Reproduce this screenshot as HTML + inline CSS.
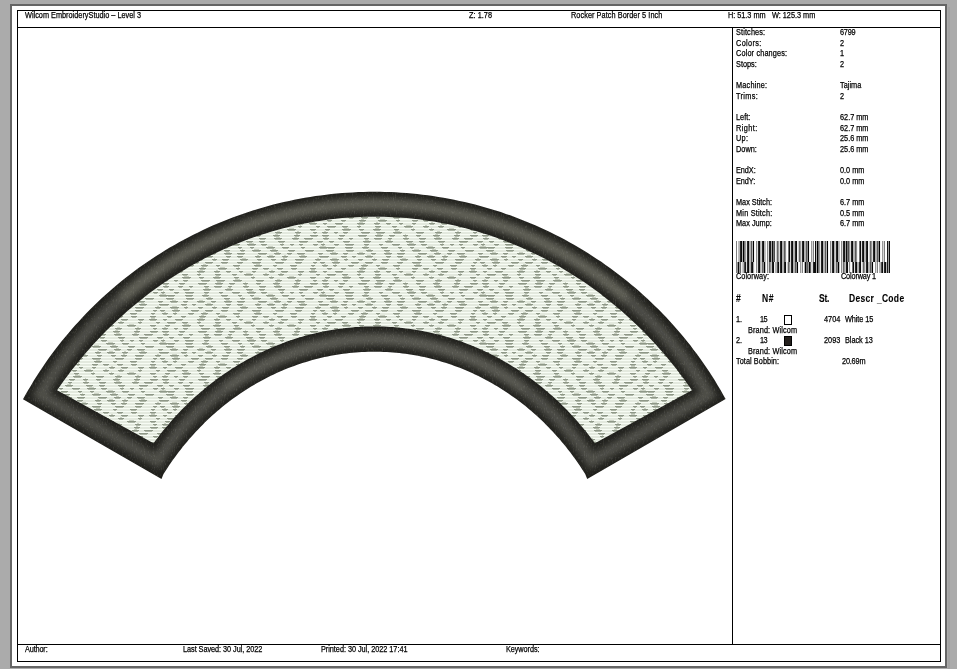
<!DOCTYPE html>
<html><head><meta charset="utf-8"><style>
html,body{margin:0;padding:0}
body{width:957px;height:669px;background:#ababab;position:relative;overflow:hidden}
.abs{position:absolute}
.t,.b{position:absolute;white-space:nowrap;color:#000;font:8.5px 'Liberation Sans', sans-serif;line-height:10px;transform:scaleX(0.86);transform-origin:0 0;-webkit-text-stroke:0.25px #000}
.b{font:bold 9.9px 'Liberation Sans', sans-serif;line-height:10px;transform:scaleX(0.86) scaleY(1.167);transform-origin:0 8px;-webkit-text-stroke:0.1px #000}
#pg{position:absolute;left:10px;top:4px;width:933px;height:660px;border:2px solid #656565;background:#fff}
.ln{position:absolute;background:#000}
</style></head><body>
<div id="pg"></div>
<div class="abs" style="left:948px;top:7px;width:2px;height:662px;background:#a3a3a3"></div>
<div class="ln" style="left:17px;top:10px;width:924px;height:1px"></div>
<div class="ln" style="left:17px;top:661px;width:924px;height:1px"></div>
<div class="ln" style="left:17px;top:10px;width:1px;height:652px"></div>
<div class="ln" style="left:940px;top:10px;width:1px;height:652px"></div>
<div class="ln" style="left:17px;top:27px;width:924px;height:1px"></div>
<div class="ln" style="left:17px;top:644px;width:924px;height:1px"></div>
<div class="ln" style="left:732px;top:27px;width:1px;height:618px"></div>
<svg class="abs" style="left:0;top:0" width="957" height="669">
<defs>
<pattern id="tat" width="160" height="48" patternUnits="userSpaceOnUse"><rect width="160" height="48" fill="#e3e9de"/><rect y="0" width="160" height="1" fill="#f7fcf4"/><rect x="9" y="1" width="5" height="1" fill="#8f9888"/><rect x="10" y="2" width="3" height="1" fill="#b0b8a9"/><rect x="23" y="1" width="7" height="1" fill="#8f9888"/><rect x="24" y="2" width="5" height="1" fill="#b0b8a9"/><rect x="43" y="1" width="8" height="1" fill="#8f9888"/><rect x="44" y="2" width="6" height="1" fill="#b0b8a9"/><rect x="45" y="0" width="4" height="1" fill="#cdd4c6"/><rect x="65" y="1" width="8" height="1" fill="#8f9888"/><rect x="66" y="2" width="6" height="1" fill="#b0b8a9"/><rect x="67" y="0" width="4" height="1" fill="#cdd4c6"/><rect x="86" y="1" width="7" height="1" fill="#8f9888"/><rect x="87" y="2" width="5" height="1" fill="#b0b8a9"/><rect x="99" y="1" width="6" height="1" fill="#8f9888"/><rect x="100" y="2" width="4" height="1" fill="#b0b8a9"/><rect x="118" y="1" width="7" height="1" fill="#8f9888"/><rect x="119" y="2" width="5" height="1" fill="#b0b8a9"/><rect x="139" y="1" width="9" height="1" fill="#8f9888"/><rect x="140" y="2" width="7" height="1" fill="#b0b8a9"/><rect x="157" y="1" width="3" height="1" fill="#8f9888"/><rect x="0" y="1" width="3" height="1" fill="#8f9888"/><rect x="158" y="2" width="2" height="1" fill="#b0b8a9"/><rect x="0" y="2" width="2" height="1" fill="#b0b8a9"/><rect y="3" width="160" height="1" fill="#f7fcf4"/><rect x="1" y="4" width="4" height="1" fill="#8f9888"/><rect x="2" y="5" width="2" height="1" fill="#b0b8a9"/><rect x="3" y="3" width="1" height="1" fill="#cdd4c6"/><rect x="14" y="4" width="5" height="1" fill="#8f9888"/><rect x="15" y="5" width="3" height="1" fill="#b0b8a9"/><rect x="25" y="4" width="9" height="1" fill="#8f9888"/><rect x="26" y="5" width="7" height="1" fill="#b0b8a9"/><rect x="44" y="4" width="5" height="1" fill="#8f9888"/><rect x="45" y="5" width="3" height="1" fill="#b0b8a9"/><rect x="59" y="4" width="4" height="1" fill="#8f9888"/><rect x="60" y="5" width="2" height="1" fill="#b0b8a9"/><rect x="72" y="4" width="8" height="1" fill="#8f9888"/><rect x="73" y="5" width="6" height="1" fill="#b0b8a9"/><rect x="87" y="4" width="9" height="1" fill="#8f9888"/><rect x="88" y="5" width="7" height="1" fill="#b0b8a9"/><rect x="89" y="3" width="5" height="1" fill="#cdd4c6"/><rect x="101" y="4" width="6" height="1" fill="#8f9888"/><rect x="102" y="5" width="4" height="1" fill="#b0b8a9"/><rect x="120" y="4" width="4" height="1" fill="#8f9888"/><rect x="121" y="5" width="2" height="1" fill="#b0b8a9"/><rect x="122" y="3" width="1" height="1" fill="#cdd4c6"/><rect x="130" y="4" width="4" height="1" fill="#8f9888"/><rect x="131" y="5" width="2" height="1" fill="#b0b8a9"/><rect x="139" y="4" width="4" height="1" fill="#8f9888"/><rect x="140" y="5" width="2" height="1" fill="#b0b8a9"/><rect x="153" y="4" width="5" height="1" fill="#8f9888"/><rect x="154" y="5" width="3" height="1" fill="#b0b8a9"/><rect y="6" width="160" height="1" fill="#f7fcf4"/><rect x="7" y="7" width="8" height="1" fill="#8f9888"/><rect x="8" y="8" width="6" height="1" fill="#b0b8a9"/><rect x="25" y="7" width="8" height="1" fill="#8f9888"/><rect x="26" y="8" width="6" height="1" fill="#b0b8a9"/><rect x="42" y="7" width="7" height="1" fill="#8f9888"/><rect x="43" y="8" width="5" height="1" fill="#b0b8a9"/><rect x="44" y="6" width="3" height="1" fill="#cdd4c6"/><rect x="61" y="7" width="7" height="1" fill="#8f9888"/><rect x="62" y="8" width="5" height="1" fill="#b0b8a9"/><rect x="78" y="7" width="4" height="1" fill="#8f9888"/><rect x="79" y="8" width="2" height="1" fill="#b0b8a9"/><rect x="90" y="7" width="4" height="1" fill="#8f9888"/><rect x="91" y="8" width="2" height="1" fill="#b0b8a9"/><rect x="106" y="7" width="9" height="1" fill="#8f9888"/><rect x="107" y="8" width="7" height="1" fill="#b0b8a9"/><rect x="108" y="6" width="5" height="1" fill="#cdd4c6"/><rect x="122" y="7" width="7" height="1" fill="#8f9888"/><rect x="123" y="8" width="5" height="1" fill="#b0b8a9"/><rect x="141" y="7" width="4" height="1" fill="#8f9888"/><rect x="142" y="8" width="2" height="1" fill="#b0b8a9"/><rect x="159" y="7" width="1" height="1" fill="#8f9888"/><rect x="0" y="7" width="8" height="1" fill="#8f9888"/><rect x="0" y="8" width="7" height="1" fill="#b0b8a9"/><rect x="0" y="6" width="6" height="1" fill="#cdd4c6"/><rect y="9" width="160" height="1" fill="#f7fcf4"/><rect x="6" y="10" width="8" height="1" fill="#8f9888"/><rect x="7" y="11" width="6" height="1" fill="#b0b8a9"/><rect x="26" y="10" width="8" height="1" fill="#8f9888"/><rect x="27" y="11" width="6" height="1" fill="#b0b8a9"/><rect x="46" y="10" width="7" height="1" fill="#8f9888"/><rect x="47" y="11" width="5" height="1" fill="#b0b8a9"/><rect x="48" y="9" width="3" height="1" fill="#cdd4c6"/><rect x="64" y="10" width="6" height="1" fill="#8f9888"/><rect x="65" y="11" width="4" height="1" fill="#b0b8a9"/><rect x="80" y="10" width="5" height="1" fill="#8f9888"/><rect x="81" y="11" width="3" height="1" fill="#b0b8a9"/><rect x="82" y="9" width="1" height="1" fill="#cdd4c6"/><rect x="92" y="10" width="9" height="1" fill="#8f9888"/><rect x="93" y="11" width="7" height="1" fill="#b0b8a9"/><rect x="94" y="9" width="5" height="1" fill="#cdd4c6"/><rect x="110" y="10" width="8" height="1" fill="#8f9888"/><rect x="111" y="11" width="6" height="1" fill="#b0b8a9"/><rect x="112" y="9" width="4" height="1" fill="#cdd4c6"/><rect x="128" y="10" width="7" height="1" fill="#8f9888"/><rect x="129" y="11" width="5" height="1" fill="#b0b8a9"/><rect x="145" y="10" width="9" height="1" fill="#8f9888"/><rect x="146" y="11" width="7" height="1" fill="#b0b8a9"/><rect y="12" width="160" height="1" fill="#f7fcf4"/><rect x="10" y="13" width="8" height="1" fill="#8f9888"/><rect x="11" y="14" width="6" height="1" fill="#b0b8a9"/><rect x="12" y="12" width="4" height="1" fill="#cdd4c6"/><rect x="23" y="13" width="5" height="1" fill="#8f9888"/><rect x="24" y="14" width="3" height="1" fill="#b0b8a9"/><rect x="37" y="13" width="8" height="1" fill="#8f9888"/><rect x="38" y="14" width="6" height="1" fill="#b0b8a9"/><rect x="39" y="12" width="4" height="1" fill="#cdd4c6"/><rect x="51" y="13" width="5" height="1" fill="#8f9888"/><rect x="52" y="14" width="3" height="1" fill="#b0b8a9"/><rect x="64" y="13" width="8" height="1" fill="#8f9888"/><rect x="65" y="14" width="6" height="1" fill="#b0b8a9"/><rect x="66" y="12" width="4" height="1" fill="#cdd4c6"/><rect x="77" y="13" width="8" height="1" fill="#8f9888"/><rect x="78" y="14" width="6" height="1" fill="#b0b8a9"/><rect x="98" y="13" width="9" height="1" fill="#8f9888"/><rect x="99" y="14" width="7" height="1" fill="#b0b8a9"/><rect x="114" y="13" width="7" height="1" fill="#8f9888"/><rect x="115" y="14" width="5" height="1" fill="#b0b8a9"/><rect x="116" y="12" width="3" height="1" fill="#cdd4c6"/><rect x="127" y="13" width="5" height="1" fill="#8f9888"/><rect x="128" y="14" width="3" height="1" fill="#b0b8a9"/><rect x="137" y="13" width="8" height="1" fill="#8f9888"/><rect x="138" y="14" width="6" height="1" fill="#b0b8a9"/><rect x="158" y="13" width="2" height="1" fill="#8f9888"/><rect x="0" y="13" width="3" height="1" fill="#8f9888"/><rect x="159" y="14" width="1" height="1" fill="#b0b8a9"/><rect x="0" y="14" width="2" height="1" fill="#b0b8a9"/><rect y="15" width="160" height="1" fill="#f7fcf4"/><rect x="5" y="16" width="4" height="1" fill="#8f9888"/><rect x="6" y="17" width="2" height="1" fill="#b0b8a9"/><rect x="21" y="16" width="6" height="1" fill="#8f9888"/><rect x="22" y="17" width="4" height="1" fill="#b0b8a9"/><rect x="32" y="16" width="4" height="1" fill="#8f9888"/><rect x="33" y="17" width="2" height="1" fill="#b0b8a9"/><rect x="45" y="16" width="8" height="1" fill="#8f9888"/><rect x="46" y="17" width="6" height="1" fill="#b0b8a9"/><rect x="47" y="15" width="4" height="1" fill="#cdd4c6"/><rect x="66" y="16" width="5" height="1" fill="#8f9888"/><rect x="67" y="17" width="3" height="1" fill="#b0b8a9"/><rect x="77" y="16" width="6" height="1" fill="#8f9888"/><rect x="78" y="17" width="4" height="1" fill="#b0b8a9"/><rect x="95" y="16" width="6" height="1" fill="#8f9888"/><rect x="96" y="17" width="4" height="1" fill="#b0b8a9"/><rect x="97" y="15" width="2" height="1" fill="#cdd4c6"/><rect x="107" y="16" width="8" height="1" fill="#8f9888"/><rect x="108" y="17" width="6" height="1" fill="#b0b8a9"/><rect x="109" y="15" width="4" height="1" fill="#cdd4c6"/><rect x="122" y="16" width="6" height="1" fill="#8f9888"/><rect x="123" y="17" width="4" height="1" fill="#b0b8a9"/><rect x="124" y="15" width="2" height="1" fill="#cdd4c6"/><rect x="139" y="16" width="8" height="1" fill="#8f9888"/><rect x="140" y="17" width="6" height="1" fill="#b0b8a9"/><rect x="141" y="15" width="4" height="1" fill="#cdd4c6"/><rect x="159" y="16" width="1" height="1" fill="#8f9888"/><rect x="0" y="16" width="7" height="1" fill="#8f9888"/><rect x="0" y="17" width="6" height="1" fill="#b0b8a9"/><rect y="18" width="160" height="1" fill="#f7fcf4"/><rect x="10" y="19" width="9" height="1" fill="#8f9888"/><rect x="11" y="20" width="7" height="1" fill="#b0b8a9"/><rect x="12" y="18" width="5" height="1" fill="#cdd4c6"/><rect x="24" y="19" width="4" height="1" fill="#8f9888"/><rect x="25" y="20" width="2" height="1" fill="#b0b8a9"/><rect x="26" y="18" width="1" height="1" fill="#cdd4c6"/><rect x="38" y="19" width="5" height="1" fill="#8f9888"/><rect x="39" y="20" width="3" height="1" fill="#b0b8a9"/><rect x="52" y="19" width="5" height="1" fill="#8f9888"/><rect x="53" y="20" width="3" height="1" fill="#b0b8a9"/><rect x="54" y="18" width="1" height="1" fill="#cdd4c6"/><rect x="62" y="19" width="7" height="1" fill="#8f9888"/><rect x="63" y="20" width="5" height="1" fill="#b0b8a9"/><rect x="80" y="19" width="8" height="1" fill="#8f9888"/><rect x="81" y="20" width="6" height="1" fill="#b0b8a9"/><rect x="82" y="18" width="4" height="1" fill="#cdd4c6"/><rect x="97" y="19" width="5" height="1" fill="#8f9888"/><rect x="98" y="20" width="3" height="1" fill="#b0b8a9"/><rect x="111" y="19" width="5" height="1" fill="#8f9888"/><rect x="112" y="20" width="3" height="1" fill="#b0b8a9"/><rect x="121" y="19" width="6" height="1" fill="#8f9888"/><rect x="122" y="20" width="4" height="1" fill="#b0b8a9"/><rect x="123" y="18" width="2" height="1" fill="#cdd4c6"/><rect x="135" y="19" width="9" height="1" fill="#8f9888"/><rect x="136" y="20" width="7" height="1" fill="#b0b8a9"/><rect x="155" y="19" width="5" height="1" fill="#8f9888"/><rect x="0" y="19" width="1" height="1" fill="#8f9888"/><rect x="156" y="20" width="4" height="1" fill="#b0b8a9"/><rect x="157" y="18" width="2" height="1" fill="#cdd4c6"/><rect y="21" width="160" height="1" fill="#f7fcf4"/><rect x="0" y="22" width="5" height="1" fill="#8f9888"/><rect x="1" y="23" width="3" height="1" fill="#b0b8a9"/><rect x="12" y="22" width="8" height="1" fill="#8f9888"/><rect x="13" y="23" width="6" height="1" fill="#b0b8a9"/><rect x="14" y="21" width="4" height="1" fill="#cdd4c6"/><rect x="31" y="22" width="8" height="1" fill="#8f9888"/><rect x="32" y="23" width="6" height="1" fill="#b0b8a9"/><rect x="45" y="22" width="8" height="1" fill="#8f9888"/><rect x="46" y="23" width="6" height="1" fill="#b0b8a9"/><rect x="61" y="22" width="7" height="1" fill="#8f9888"/><rect x="62" y="23" width="5" height="1" fill="#b0b8a9"/><rect x="77" y="22" width="6" height="1" fill="#8f9888"/><rect x="78" y="23" width="4" height="1" fill="#b0b8a9"/><rect x="92" y="22" width="9" height="1" fill="#8f9888"/><rect x="93" y="23" width="7" height="1" fill="#b0b8a9"/><rect x="115" y="22" width="9" height="1" fill="#8f9888"/><rect x="116" y="23" width="7" height="1" fill="#b0b8a9"/><rect x="135" y="22" width="7" height="1" fill="#8f9888"/><rect x="136" y="23" width="5" height="1" fill="#b0b8a9"/><rect x="153" y="22" width="4" height="1" fill="#8f9888"/><rect x="154" y="23" width="2" height="1" fill="#b0b8a9"/><rect y="24" width="160" height="1" fill="#f7fcf4"/><rect x="2" y="25" width="6" height="1" fill="#8f9888"/><rect x="3" y="26" width="4" height="1" fill="#b0b8a9"/><rect x="4" y="24" width="2" height="1" fill="#cdd4c6"/><rect x="13" y="25" width="4" height="1" fill="#8f9888"/><rect x="14" y="26" width="2" height="1" fill="#b0b8a9"/><rect x="15" y="24" width="1" height="1" fill="#cdd4c6"/><rect x="28" y="25" width="6" height="1" fill="#8f9888"/><rect x="29" y="26" width="4" height="1" fill="#b0b8a9"/><rect x="41" y="25" width="7" height="1" fill="#8f9888"/><rect x="42" y="26" width="5" height="1" fill="#b0b8a9"/><rect x="43" y="24" width="3" height="1" fill="#cdd4c6"/><rect x="56" y="25" width="4" height="1" fill="#8f9888"/><rect x="57" y="26" width="2" height="1" fill="#b0b8a9"/><rect x="73" y="25" width="7" height="1" fill="#8f9888"/><rect x="74" y="26" width="5" height="1" fill="#b0b8a9"/><rect x="94" y="25" width="8" height="1" fill="#8f9888"/><rect x="95" y="26" width="6" height="1" fill="#b0b8a9"/><rect x="96" y="24" width="4" height="1" fill="#cdd4c6"/><rect x="113" y="25" width="4" height="1" fill="#8f9888"/><rect x="114" y="26" width="2" height="1" fill="#b0b8a9"/><rect x="130" y="25" width="7" height="1" fill="#8f9888"/><rect x="131" y="26" width="5" height="1" fill="#b0b8a9"/><rect x="151" y="25" width="4" height="1" fill="#8f9888"/><rect x="152" y="26" width="2" height="1" fill="#b0b8a9"/><rect y="27" width="160" height="1" fill="#f7fcf4"/><rect x="7" y="28" width="5" height="1" fill="#8f9888"/><rect x="8" y="29" width="3" height="1" fill="#b0b8a9"/><rect x="21" y="28" width="5" height="1" fill="#8f9888"/><rect x="22" y="29" width="3" height="1" fill="#b0b8a9"/><rect x="39" y="28" width="7" height="1" fill="#8f9888"/><rect x="40" y="29" width="5" height="1" fill="#b0b8a9"/><rect x="41" y="27" width="3" height="1" fill="#cdd4c6"/><rect x="58" y="28" width="9" height="1" fill="#8f9888"/><rect x="59" y="29" width="7" height="1" fill="#b0b8a9"/><rect x="60" y="27" width="5" height="1" fill="#cdd4c6"/><rect x="76" y="28" width="4" height="1" fill="#8f9888"/><rect x="77" y="29" width="2" height="1" fill="#b0b8a9"/><rect x="78" y="27" width="1" height="1" fill="#cdd4c6"/><rect x="92" y="28" width="6" height="1" fill="#8f9888"/><rect x="93" y="29" width="4" height="1" fill="#b0b8a9"/><rect x="103" y="28" width="6" height="1" fill="#8f9888"/><rect x="104" y="29" width="4" height="1" fill="#b0b8a9"/><rect x="117" y="28" width="6" height="1" fill="#8f9888"/><rect x="118" y="29" width="4" height="1" fill="#b0b8a9"/><rect x="131" y="28" width="6" height="1" fill="#8f9888"/><rect x="132" y="29" width="4" height="1" fill="#b0b8a9"/><rect x="150" y="28" width="6" height="1" fill="#8f9888"/><rect x="151" y="29" width="4" height="1" fill="#b0b8a9"/><rect y="30" width="160" height="1" fill="#f7fcf4"/><rect x="3" y="31" width="4" height="1" fill="#8f9888"/><rect x="4" y="32" width="2" height="1" fill="#b0b8a9"/><rect x="15" y="31" width="8" height="1" fill="#8f9888"/><rect x="16" y="32" width="6" height="1" fill="#b0b8a9"/><rect x="37" y="31" width="8" height="1" fill="#8f9888"/><rect x="38" y="32" width="6" height="1" fill="#b0b8a9"/><rect x="39" y="30" width="4" height="1" fill="#cdd4c6"/><rect x="54" y="31" width="6" height="1" fill="#8f9888"/><rect x="55" y="32" width="4" height="1" fill="#b0b8a9"/><rect x="56" y="30" width="2" height="1" fill="#cdd4c6"/><rect x="66" y="31" width="5" height="1" fill="#8f9888"/><rect x="67" y="32" width="3" height="1" fill="#b0b8a9"/><rect x="79" y="31" width="4" height="1" fill="#8f9888"/><rect x="80" y="32" width="2" height="1" fill="#b0b8a9"/><rect x="92" y="31" width="4" height="1" fill="#8f9888"/><rect x="93" y="32" width="2" height="1" fill="#b0b8a9"/><rect x="109" y="31" width="6" height="1" fill="#8f9888"/><rect x="110" y="32" width="4" height="1" fill="#b0b8a9"/><rect x="111" y="30" width="2" height="1" fill="#cdd4c6"/><rect x="121" y="31" width="7" height="1" fill="#8f9888"/><rect x="122" y="32" width="5" height="1" fill="#b0b8a9"/><rect x="138" y="31" width="6" height="1" fill="#8f9888"/><rect x="139" y="32" width="4" height="1" fill="#b0b8a9"/><rect x="149" y="31" width="8" height="1" fill="#8f9888"/><rect x="150" y="32" width="6" height="1" fill="#b0b8a9"/><rect x="151" y="30" width="4" height="1" fill="#cdd4c6"/><rect y="33" width="160" height="1" fill="#f7fcf4"/><rect x="7" y="34" width="9" height="1" fill="#8f9888"/><rect x="8" y="35" width="7" height="1" fill="#b0b8a9"/><rect x="22" y="34" width="6" height="1" fill="#8f9888"/><rect x="23" y="35" width="4" height="1" fill="#b0b8a9"/><rect x="37" y="34" width="4" height="1" fill="#8f9888"/><rect x="38" y="35" width="2" height="1" fill="#b0b8a9"/><rect x="39" y="33" width="1" height="1" fill="#cdd4c6"/><rect x="55" y="34" width="6" height="1" fill="#8f9888"/><rect x="56" y="35" width="4" height="1" fill="#b0b8a9"/><rect x="72" y="34" width="5" height="1" fill="#8f9888"/><rect x="73" y="35" width="3" height="1" fill="#b0b8a9"/><rect x="84" y="34" width="9" height="1" fill="#8f9888"/><rect x="85" y="35" width="7" height="1" fill="#b0b8a9"/><rect x="86" y="33" width="5" height="1" fill="#cdd4c6"/><rect x="103" y="34" width="6" height="1" fill="#8f9888"/><rect x="104" y="35" width="4" height="1" fill="#b0b8a9"/><rect x="105" y="33" width="2" height="1" fill="#cdd4c6"/><rect x="118" y="34" width="6" height="1" fill="#8f9888"/><rect x="119" y="35" width="4" height="1" fill="#b0b8a9"/><rect x="120" y="33" width="2" height="1" fill="#cdd4c6"/><rect x="138" y="34" width="4" height="1" fill="#8f9888"/><rect x="139" y="35" width="2" height="1" fill="#b0b8a9"/><rect x="140" y="33" width="1" height="1" fill="#cdd4c6"/><rect x="156" y="34" width="4" height="1" fill="#8f9888"/><rect x="157" y="35" width="2" height="1" fill="#b0b8a9"/><rect y="36" width="160" height="1" fill="#f7fcf4"/><rect x="5" y="37" width="5" height="1" fill="#8f9888"/><rect x="6" y="38" width="3" height="1" fill="#b0b8a9"/><rect x="22" y="37" width="9" height="1" fill="#8f9888"/><rect x="23" y="38" width="7" height="1" fill="#b0b8a9"/><rect x="24" y="36" width="5" height="1" fill="#cdd4c6"/><rect x="39" y="37" width="5" height="1" fill="#8f9888"/><rect x="40" y="38" width="3" height="1" fill="#b0b8a9"/><rect x="53" y="37" width="8" height="1" fill="#8f9888"/><rect x="54" y="38" width="6" height="1" fill="#b0b8a9"/><rect x="55" y="36" width="4" height="1" fill="#cdd4c6"/><rect x="74" y="37" width="5" height="1" fill="#8f9888"/><rect x="75" y="38" width="3" height="1" fill="#b0b8a9"/><rect x="91" y="37" width="4" height="1" fill="#8f9888"/><rect x="92" y="38" width="2" height="1" fill="#b0b8a9"/><rect x="93" y="36" width="1" height="1" fill="#cdd4c6"/><rect x="109" y="37" width="5" height="1" fill="#8f9888"/><rect x="110" y="38" width="3" height="1" fill="#b0b8a9"/><rect x="111" y="36" width="1" height="1" fill="#cdd4c6"/><rect x="127" y="37" width="9" height="1" fill="#8f9888"/><rect x="128" y="38" width="7" height="1" fill="#b0b8a9"/><rect x="129" y="36" width="5" height="1" fill="#cdd4c6"/><rect x="150" y="37" width="6" height="1" fill="#8f9888"/><rect x="151" y="38" width="4" height="1" fill="#b0b8a9"/><rect y="39" width="160" height="1" fill="#f7fcf4"/><rect x="2" y="40" width="6" height="1" fill="#8f9888"/><rect x="3" y="41" width="4" height="1" fill="#b0b8a9"/><rect x="4" y="39" width="2" height="1" fill="#cdd4c6"/><rect x="14" y="40" width="4" height="1" fill="#8f9888"/><rect x="15" y="41" width="2" height="1" fill="#b0b8a9"/><rect x="23" y="40" width="5" height="1" fill="#8f9888"/><rect x="24" y="41" width="3" height="1" fill="#b0b8a9"/><rect x="41" y="40" width="9" height="1" fill="#8f9888"/><rect x="42" y="41" width="7" height="1" fill="#b0b8a9"/><rect x="56" y="40" width="9" height="1" fill="#8f9888"/><rect x="57" y="41" width="7" height="1" fill="#b0b8a9"/><rect x="73" y="40" width="9" height="1" fill="#8f9888"/><rect x="74" y="41" width="7" height="1" fill="#b0b8a9"/><rect x="75" y="39" width="5" height="1" fill="#cdd4c6"/><rect x="96" y="40" width="8" height="1" fill="#8f9888"/><rect x="97" y="41" width="6" height="1" fill="#b0b8a9"/><rect x="115" y="40" width="7" height="1" fill="#8f9888"/><rect x="116" y="41" width="5" height="1" fill="#b0b8a9"/><rect x="117" y="39" width="3" height="1" fill="#cdd4c6"/><rect x="135" y="40" width="6" height="1" fill="#8f9888"/><rect x="136" y="41" width="4" height="1" fill="#b0b8a9"/><rect x="137" y="39" width="2" height="1" fill="#cdd4c6"/><rect x="153" y="40" width="4" height="1" fill="#8f9888"/><rect x="154" y="41" width="2" height="1" fill="#b0b8a9"/><rect y="42" width="160" height="1" fill="#f7fcf4"/><rect x="2" y="43" width="7" height="1" fill="#8f9888"/><rect x="3" y="44" width="5" height="1" fill="#b0b8a9"/><rect x="19" y="43" width="6" height="1" fill="#8f9888"/><rect x="20" y="44" width="4" height="1" fill="#b0b8a9"/><rect x="38" y="43" width="9" height="1" fill="#8f9888"/><rect x="39" y="44" width="7" height="1" fill="#b0b8a9"/><rect x="55" y="43" width="8" height="1" fill="#8f9888"/><rect x="56" y="44" width="6" height="1" fill="#b0b8a9"/><rect x="57" y="42" width="4" height="1" fill="#cdd4c6"/><rect x="69" y="43" width="6" height="1" fill="#8f9888"/><rect x="70" y="44" width="4" height="1" fill="#b0b8a9"/><rect x="83" y="43" width="5" height="1" fill="#8f9888"/><rect x="84" y="44" width="3" height="1" fill="#b0b8a9"/><rect x="85" y="42" width="1" height="1" fill="#cdd4c6"/><rect x="96" y="43" width="5" height="1" fill="#8f9888"/><rect x="97" y="44" width="3" height="1" fill="#b0b8a9"/><rect x="113" y="43" width="7" height="1" fill="#8f9888"/><rect x="114" y="44" width="5" height="1" fill="#b0b8a9"/><rect x="115" y="42" width="3" height="1" fill="#cdd4c6"/><rect x="134" y="43" width="6" height="1" fill="#8f9888"/><rect x="135" y="44" width="4" height="1" fill="#b0b8a9"/><rect x="136" y="42" width="2" height="1" fill="#cdd4c6"/><rect x="150" y="43" width="8" height="1" fill="#8f9888"/><rect x="151" y="44" width="6" height="1" fill="#b0b8a9"/><rect y="45" width="160" height="1" fill="#f7fcf4"/><rect x="3" y="46" width="6" height="1" fill="#8f9888"/><rect x="4" y="47" width="4" height="1" fill="#b0b8a9"/><rect x="5" y="45" width="2" height="1" fill="#cdd4c6"/><rect x="18" y="46" width="5" height="1" fill="#8f9888"/><rect x="19" y="47" width="3" height="1" fill="#b0b8a9"/><rect x="29" y="46" width="4" height="1" fill="#8f9888"/><rect x="30" y="47" width="2" height="1" fill="#b0b8a9"/><rect x="44" y="46" width="5" height="1" fill="#8f9888"/><rect x="45" y="47" width="3" height="1" fill="#b0b8a9"/><rect x="54" y="46" width="8" height="1" fill="#8f9888"/><rect x="55" y="47" width="6" height="1" fill="#b0b8a9"/><rect x="68" y="46" width="4" height="1" fill="#8f9888"/><rect x="69" y="47" width="2" height="1" fill="#b0b8a9"/><rect x="83" y="46" width="6" height="1" fill="#8f9888"/><rect x="84" y="47" width="4" height="1" fill="#b0b8a9"/><rect x="85" y="45" width="2" height="1" fill="#cdd4c6"/><rect x="99" y="46" width="7" height="1" fill="#8f9888"/><rect x="100" y="47" width="5" height="1" fill="#b0b8a9"/><rect x="114" y="46" width="8" height="1" fill="#8f9888"/><rect x="115" y="47" width="6" height="1" fill="#b0b8a9"/><rect x="116" y="45" width="4" height="1" fill="#cdd4c6"/><rect x="132" y="46" width="7" height="1" fill="#8f9888"/><rect x="133" y="47" width="5" height="1" fill="#b0b8a9"/><rect x="134" y="45" width="3" height="1" fill="#cdd4c6"/><rect x="144" y="46" width="9" height="1" fill="#8f9888"/><rect x="145" y="47" width="7" height="1" fill="#b0b8a9"/></pattern>
<clipPath id="oc"><path d="M 23.0,399.2 25.6,394.6 28.2,389.9 31.0,385.4 33.7,380.8 36.6,376.3 39.5,371.8 42.4,367.4 45.4,363.0 48.5,358.6 51.6,354.3 54.8,350.0 58.1,345.8 61.4,341.6 64.8,337.5 68.2,333.4 71.7,329.3 75.2,325.3 78.8,321.4 82.4,317.4 86.1,313.6 89.8,309.8 93.6,306.0 97.5,302.3 101.4,298.6 105.3,295.0 109.3,291.5 113.3,288.0 117.4,284.5 121.6,281.1 125.7,277.8 130.0,274.5 134.2,271.3 138.5,268.1 142.9,265.0 147.3,262.0 151.7,259.0 156.2,256.0 160.7,253.2 165.3,250.3 169.8,247.6 174.5,244.9 179.1,242.3 183.8,239.7 188.6,237.2 193.3,234.8 198.1,232.4 203.0,230.1 207.8,227.8 212.7,225.6 217.6,223.5 222.6,221.5 227.6,219.5 232.6,217.6 237.6,215.7 242.6,213.9 247.7,212.2 252.8,210.5 257.9,209.0 263.1,207.4 268.2,206.0 273.4,204.6 278.6,203.3 283.8,202.1 289.1,200.9 294.3,199.8 299.6,198.8 304.9,197.8 310.2,196.9 315.5,196.1 320.8,195.4 326.1,194.7 331.4,194.1 336.7,193.5 342.1,193.1 347.4,192.7 352.8,192.4 358.2,192.1 363.5,191.9 368.9,191.8 374.2,191.8 379.6,191.8 385.0,191.9 390.3,192.1 395.7,192.3 401.0,192.7 406.4,193.1 411.7,193.5 417.1,194.1 422.4,194.7 427.7,195.3 433.0,196.1 438.3,196.9 443.6,197.8 448.9,198.7 454.2,199.8 459.4,200.9 464.7,202.0 469.9,203.3 475.1,204.6 480.3,205.9 485.4,207.4 490.6,208.9 495.7,210.5 500.8,212.1 505.9,213.9 510.9,215.6 515.9,217.5 520.9,219.4 525.9,221.4 530.9,223.4 535.8,225.6 540.7,227.7 545.6,230.0 550.4,232.3 555.2,234.7 559.9,237.1 564.7,239.6 569.4,242.2 574.0,244.8 578.7,247.5 583.3,250.2 587.8,253.1 592.3,255.9 596.8,258.9 601.3,261.8 605.6,264.9 610.0,268.0 614.3,271.2 618.6,274.4 622.8,277.7 627.0,281.0 631.1,284.4 635.2,287.8 639.2,291.3 643.2,294.9 647.2,298.5 651.1,302.2 654.9,305.9 658.7,309.6 662.5,313.4 666.2,317.3 669.8,321.2 673.4,325.2 676.9,329.2 680.4,333.2 683.8,337.3 687.2,341.4 690.5,345.6 693.7,349.9 696.9,354.1 700.1,358.4 703.1,362.8 706.2,367.2 709.1,371.6 712.0,376.1 714.9,380.6 717.6,385.2 720.4,389.8 723.0,394.4 725.6,399.0 L 587.2,479.0 585.2,474.0 583.4,471.2 581.6,468.4 579.7,465.6 577.8,462.8 575.9,460.1 574.0,457.4 572.0,454.7 570.0,452.0 567.9,449.4 565.9,446.8 563.8,444.2 561.6,441.7 559.5,439.1 557.3,436.7 555.1,434.2 552.9,431.8 550.6,429.4 548.3,427.0 546.0,424.7 543.7,422.3 541.3,420.1 538.9,417.8 536.5,415.6 534.1,413.4 531.6,411.3 529.1,409.2 526.6,407.1 524.1,405.1 521.5,403.1 518.9,401.1 516.3,399.1 513.7,397.2 511.1,395.4 508.4,393.5 505.7,391.7 503.0,390.0 500.3,388.3 497.6,386.6 494.8,384.9 492.0,383.3 489.2,381.7 486.4,380.2 483.6,378.7 480.8,377.3 477.9,375.8 475.0,374.4 472.1,373.1 469.2,371.8 466.3,370.5 463.4,369.3 460.4,368.1 457.5,367.0 454.5,365.9 451.5,364.8 448.5,363.8 445.5,362.8 442.5,361.9 439.5,361.0 436.4,360.1 433.4,359.3 430.3,358.5 427.3,357.8 424.2,357.1 421.1,356.4 418.0,355.8 414.9,355.2 411.8,354.7 408.7,354.2 405.6,353.8 402.5,353.4 399.4,353.0 396.3,352.7 393.1,352.4 390.0,352.2 386.9,352.0 383.8,351.9 380.6,351.7 377.5,351.7 374.4,351.7 371.2,351.7 368.1,351.7 364.9,351.9 361.8,352.0 358.7,352.2 355.6,352.4 352.4,352.7 349.3,353.0 346.2,353.4 343.1,353.8 340.0,354.2 336.9,354.7 333.8,355.2 330.7,355.8 327.6,356.4 324.5,357.1 321.4,357.8 318.4,358.5 315.3,359.3 312.3,360.1 309.2,361.0 306.2,361.9 303.2,362.8 300.2,363.8 297.2,364.8 294.2,365.9 291.2,367.0 288.3,368.1 285.3,369.3 282.4,370.5 279.5,371.8 276.6,373.1 273.7,374.4 270.8,375.8 267.9,377.3 265.1,378.7 262.3,380.2 259.5,381.7 256.7,383.3 253.9,384.9 251.1,386.6 248.4,388.3 245.7,390.0 243.0,391.7 240.3,393.5 237.6,395.4 235.0,397.2 232.4,399.1 229.8,401.1 227.2,403.1 224.6,405.1 222.1,407.1 219.6,409.2 217.1,411.3 214.6,413.4 212.2,415.6 209.8,417.8 207.4,420.1 205.0,422.3 202.7,424.7 200.4,427.0 198.1,429.4 195.8,431.8 193.6,434.2 191.4,436.7 189.2,439.1 187.1,441.7 184.9,444.2 182.8,446.8 180.8,449.4 178.7,452.0 176.7,454.7 174.7,457.4 172.8,460.1 170.9,462.8 169.0,465.6 167.1,468.4 165.3,471.2 163.5,474.0 161.5,479.0 Z"/></clipPath>
<filter id="sf" x="-2%" y="-2%" width="104%" height="104%"><feGaussianBlur stdDeviation="0.7"/></filter>
<filter id="bl" x="-10%" y="-10%" width="120%" height="120%"><feGaussianBlur stdDeviation="3.5"/></filter>
<filter id="nz" x="0" y="0" width="100%" height="100%">
<feTurbulence type="fractalNoise" baseFrequency="0.9 0.35" numOctaves="2" seed="4"/>
<feColorMatrix type="matrix" values="0 0 0 0 0.55  0 0 0 0 0.55  0 0 0 0 0.5  1.6 0 0 0 -0.85"/>
</filter>
</defs>
<path d="M 23.0,399.2 25.6,394.6 28.2,389.9 31.0,385.4 33.7,380.8 36.6,376.3 39.5,371.8 42.4,367.4 45.4,363.0 48.5,358.6 51.6,354.3 54.8,350.0 58.1,345.8 61.4,341.6 64.8,337.5 68.2,333.4 71.7,329.3 75.2,325.3 78.8,321.4 82.4,317.4 86.1,313.6 89.8,309.8 93.6,306.0 97.5,302.3 101.4,298.6 105.3,295.0 109.3,291.5 113.3,288.0 117.4,284.5 121.6,281.1 125.7,277.8 130.0,274.5 134.2,271.3 138.5,268.1 142.9,265.0 147.3,262.0 151.7,259.0 156.2,256.0 160.7,253.2 165.3,250.3 169.8,247.6 174.5,244.9 179.1,242.3 183.8,239.7 188.6,237.2 193.3,234.8 198.1,232.4 203.0,230.1 207.8,227.8 212.7,225.6 217.6,223.5 222.6,221.5 227.6,219.5 232.6,217.6 237.6,215.7 242.6,213.9 247.7,212.2 252.8,210.5 257.9,209.0 263.1,207.4 268.2,206.0 273.4,204.6 278.6,203.3 283.8,202.1 289.1,200.9 294.3,199.8 299.6,198.8 304.9,197.8 310.2,196.9 315.5,196.1 320.8,195.4 326.1,194.7 331.4,194.1 336.7,193.5 342.1,193.1 347.4,192.7 352.8,192.4 358.2,192.1 363.5,191.9 368.9,191.8 374.2,191.8 379.6,191.8 385.0,191.9 390.3,192.1 395.7,192.3 401.0,192.7 406.4,193.1 411.7,193.5 417.1,194.1 422.4,194.7 427.7,195.3 433.0,196.1 438.3,196.9 443.6,197.8 448.9,198.7 454.2,199.8 459.4,200.9 464.7,202.0 469.9,203.3 475.1,204.6 480.3,205.9 485.4,207.4 490.6,208.9 495.7,210.5 500.8,212.1 505.9,213.9 510.9,215.6 515.9,217.5 520.9,219.4 525.9,221.4 530.9,223.4 535.8,225.6 540.7,227.7 545.6,230.0 550.4,232.3 555.2,234.7 559.9,237.1 564.7,239.6 569.4,242.2 574.0,244.8 578.7,247.5 583.3,250.2 587.8,253.1 592.3,255.9 596.8,258.9 601.3,261.8 605.6,264.9 610.0,268.0 614.3,271.2 618.6,274.4 622.8,277.7 627.0,281.0 631.1,284.4 635.2,287.8 639.2,291.3 643.2,294.9 647.2,298.5 651.1,302.2 654.9,305.9 658.7,309.6 662.5,313.4 666.2,317.3 669.8,321.2 673.4,325.2 676.9,329.2 680.4,333.2 683.8,337.3 687.2,341.4 690.5,345.6 693.7,349.9 696.9,354.1 700.1,358.4 703.1,362.8 706.2,367.2 709.1,371.6 712.0,376.1 714.9,380.6 717.6,385.2 720.4,389.8 723.0,394.4 725.6,399.0 L 587.2,479.0 585.2,474.0 583.4,471.2 581.6,468.4 579.7,465.6 577.8,462.8 575.9,460.1 574.0,457.4 572.0,454.7 570.0,452.0 567.9,449.4 565.9,446.8 563.8,444.2 561.6,441.7 559.5,439.1 557.3,436.7 555.1,434.2 552.9,431.8 550.6,429.4 548.3,427.0 546.0,424.7 543.7,422.3 541.3,420.1 538.9,417.8 536.5,415.6 534.1,413.4 531.6,411.3 529.1,409.2 526.6,407.1 524.1,405.1 521.5,403.1 518.9,401.1 516.3,399.1 513.7,397.2 511.1,395.4 508.4,393.5 505.7,391.7 503.0,390.0 500.3,388.3 497.6,386.6 494.8,384.9 492.0,383.3 489.2,381.7 486.4,380.2 483.6,378.7 480.8,377.3 477.9,375.8 475.0,374.4 472.1,373.1 469.2,371.8 466.3,370.5 463.4,369.3 460.4,368.1 457.5,367.0 454.5,365.9 451.5,364.8 448.5,363.8 445.5,362.8 442.5,361.9 439.5,361.0 436.4,360.1 433.4,359.3 430.3,358.5 427.3,357.8 424.2,357.1 421.1,356.4 418.0,355.8 414.9,355.2 411.8,354.7 408.7,354.2 405.6,353.8 402.5,353.4 399.4,353.0 396.3,352.7 393.1,352.4 390.0,352.2 386.9,352.0 383.8,351.9 380.6,351.7 377.5,351.7 374.4,351.7 371.2,351.7 368.1,351.7 364.9,351.9 361.8,352.0 358.7,352.2 355.6,352.4 352.4,352.7 349.3,353.0 346.2,353.4 343.1,353.8 340.0,354.2 336.9,354.7 333.8,355.2 330.7,355.8 327.6,356.4 324.5,357.1 321.4,357.8 318.4,358.5 315.3,359.3 312.3,360.1 309.2,361.0 306.2,361.9 303.2,362.8 300.2,363.8 297.2,364.8 294.2,365.9 291.2,367.0 288.3,368.1 285.3,369.3 282.4,370.5 279.5,371.8 276.6,373.1 273.7,374.4 270.8,375.8 267.9,377.3 265.1,378.7 262.3,380.2 259.5,381.7 256.7,383.3 253.9,384.9 251.1,386.6 248.4,388.3 245.7,390.0 243.0,391.7 240.3,393.5 237.6,395.4 235.0,397.2 232.4,399.1 229.8,401.1 227.2,403.1 224.6,405.1 222.1,407.1 219.6,409.2 217.1,411.3 214.6,413.4 212.2,415.6 209.8,417.8 207.4,420.1 205.0,422.3 202.7,424.7 200.4,427.0 198.1,429.4 195.8,431.8 193.6,434.2 191.4,436.7 189.2,439.1 187.1,441.7 184.9,444.2 182.8,446.8 180.8,449.4 178.7,452.0 176.7,454.7 174.7,457.4 172.8,460.1 170.9,462.8 169.0,465.6 167.1,468.4 165.3,471.2 163.5,474.0 161.5,479.0 Z" fill="#1f1f1b"/>
<g clip-path="url(#oc)">
<g filter="url(#bl)"><path d="M 40.0,394.7 42.7,390.4 45.5,386.1 48.3,381.8 51.1,377.6 54.0,373.4 56.9,369.2 59.9,365.1 63.0,361.1 66.1,357.0 69.2,353.0 72.4,349.1 75.6,345.2 78.9,341.3 82.3,337.5 85.6,333.7 89.1,330.0 92.5,326.3 96.0,322.6 99.6,319.0 103.2,315.5 106.9,312.0 110.5,308.5 114.3,305.1 118.0,301.8 121.8,298.5 125.7,295.2 129.6,292.0 133.5,288.8 137.5,285.7 141.5,282.7 145.5,279.6 149.6,276.7 153.7,273.8 157.9,271.0 162.1,268.2 166.3,265.4 170.5,262.7 174.8,260.1 179.1,257.6 183.5,255.0 187.9,252.6 192.3,250.2 196.7,247.8 201.2,245.6 205.6,243.3 210.2,241.2 214.7,239.1 219.3,237.0 223.9,235.0 228.5,233.1 233.1,231.2 237.8,229.4 242.5,227.7 247.2,226.0 251.9,224.3 256.6,222.8 261.4,221.3 266.2,219.8 271.0,218.5 275.8,217.2 280.6,215.9 285.5,214.7 290.3,213.6 295.2,212.5 300.1,211.5 305.0,210.6 309.9,209.7 314.8,208.9 319.8,208.2 324.7,207.5 329.6,206.9 334.6,206.3 339.6,205.8 344.5,205.4 349.5,205.1 354.5,204.8 359.4,204.5 364.4,204.4 369.4,204.3 374.4,204.2 379.4,204.3 384.3,204.4 389.3,204.5 394.3,204.8 399.3,205.0 404.2,205.4 409.2,205.8 414.2,206.3 419.1,206.9 424.1,207.5 429.0,208.1 433.9,208.9 438.8,209.7 443.7,210.6 448.6,211.5 453.5,212.5 458.4,213.6 463.3,214.7 468.1,215.9 472.9,217.1 477.8,218.4 482.6,219.8 487.3,221.3 492.1,222.8 496.8,224.3 501.6,225.9 506.3,227.6 511.0,229.4 515.6,231.2 520.3,233.0 524.9,235.0 529.5,237.0 534.1,239.0 538.6,241.1 543.1,243.3 547.6,245.5 552.1,247.8 556.5,250.1 560.9,252.5 565.3,255.0 569.6,257.5 573.9,260.1 578.2,262.7 582.5,265.4 586.7,268.1 590.9,270.9 595.0,273.7 599.2,276.6 603.2,279.6 607.3,282.6 611.3,285.6 615.2,288.8 619.2,291.9 623.1,295.1 626.9,298.4 630.7,301.7 634.5,305.1 638.2,308.5 641.9,311.9 645.6,315.4 649.2,319.0 652.7,322.6 656.2,326.2 659.7,329.9 663.1,333.6 666.5,337.4 669.9,341.2 673.1,345.1 676.4,349.0 679.6,353.0 682.7,356.9 685.8,361.0 688.9,365.0 691.9,369.2 694.8,373.3 697.7,377.5 700.5,381.7 703.3,386.0 706.1,390.3 708.8,394.6 L 591.0,461.1 589.1,457.3 587.2,454.6 585.2,451.8 583.3,449.1 581.3,446.4 579.2,443.8 577.2,441.1 575.1,438.5 573.0,435.9 570.9,433.4 568.7,430.8 566.5,428.3 564.3,425.9 562.1,423.4 559.8,421.0 557.5,418.6 555.2,416.3 552.9,414.0 550.5,411.7 548.1,409.4 545.7,407.2 543.3,405.0 540.8,402.8 538.3,400.7 535.8,398.6 533.3,396.5 530.7,394.5 528.2,392.4 525.6,390.5 523.0,388.5 520.3,386.6 517.7,384.8 515.0,382.9 512.3,381.1 509.6,379.4 506.9,377.6 504.1,375.9 501.3,374.3 498.6,372.6 495.8,371.1 492.9,369.5 490.1,368.0 487.3,366.5 484.4,365.1 481.5,363.7 478.6,362.3 475.7,361.0 472.8,359.7 469.8,358.4 466.9,357.2 463.9,356.0 460.9,354.9 458.0,353.8 455.0,352.7 451.9,351.7 448.9,350.7 445.9,349.8 442.8,348.9 439.8,348.0 436.7,347.2 433.7,346.4 430.6,345.6 427.5,344.9 424.4,344.3 421.3,343.6 418.2,343.0 415.1,342.5 412.0,342.0 408.8,341.5 405.7,341.1 402.6,340.7 399.5,340.4 396.3,340.0 393.2,339.8 390.0,339.6 386.9,339.4 383.7,339.2 380.6,339.1 377.4,339.1 374.3,339.1 371.1,339.1 368.0,339.1 364.8,339.2 361.7,339.4 358.5,339.6 355.4,339.8 352.2,340.0 349.1,340.4 346.0,340.7 342.8,341.1 339.7,341.5 336.6,342.0 333.5,342.5 330.3,343.0 327.2,343.6 324.1,344.3 321.0,344.9 318.0,345.6 314.9,346.4 311.8,347.2 308.8,348.0 305.7,348.9 302.7,349.8 299.6,350.7 296.6,351.7 293.6,352.7 290.6,353.8 287.6,354.9 284.6,356.0 281.7,357.2 278.7,358.4 275.8,359.7 272.9,361.0 269.9,362.3 267.0,363.7 264.2,365.1 261.3,366.5 258.4,368.0 255.6,369.5 252.8,371.1 250.0,372.6 247.2,374.3 244.4,375.9 241.7,377.6 239.0,379.4 236.2,381.1 233.5,382.9 230.9,384.8 228.2,386.6 225.6,388.5 223.0,390.5 220.4,392.4 217.8,394.5 215.3,396.5 212.7,398.6 210.2,400.7 207.7,402.8 205.3,405.0 202.8,407.2 200.4,409.4 198.0,411.7 195.7,414.0 193.3,416.3 191.0,418.6 188.7,421.0 186.5,423.4 184.2,425.9 182.0,428.3 179.8,430.8 177.7,433.4 175.5,435.9 173.4,438.5 171.4,441.1 169.3,443.8 167.3,446.4 165.3,449.1 163.3,451.8 161.4,454.6 159.5,457.3 157.5,461.1 Z" fill="none" stroke="#50504a" stroke-width="12" stroke-linejoin="miter"/>
<path d="M 121.8,298.5 125.7,295.2 129.6,292.0 133.5,288.8 137.5,285.7 141.5,282.7 145.5,279.6 149.6,276.7 153.7,273.8 157.9,271.0 162.1,268.2 166.3,265.4 170.5,262.7 174.8,260.1 179.1,257.6 183.5,255.0 187.9,252.6 192.3,250.2 196.7,247.8 201.2,245.6 205.6,243.3 210.2,241.2 214.7,239.1 219.3,237.0 223.9,235.0 228.5,233.1 233.1,231.2 237.8,229.4 242.5,227.7 247.2,226.0 251.9,224.3 256.6,222.8 261.4,221.3 266.2,219.8 271.0,218.5 275.8,217.2 280.6,215.9 285.5,214.7 290.3,213.6 295.2,212.5 300.1,211.5 305.0,210.6 309.9,209.7 314.8,208.9 319.8,208.2 324.7,207.5 329.6,206.9 334.6,206.3 339.6,205.8 344.5,205.4 349.5,205.1 354.5,204.8 359.4,204.5 364.4,204.4 369.4,204.3 374.4,204.2 379.4,204.3 384.3,204.4 389.3,204.5 394.3,204.8 399.3,205.0 404.2,205.4 409.2,205.8 414.2,206.3 419.1,206.9 424.1,207.5 429.0,208.1 433.9,208.9 438.8,209.7 443.7,210.6 448.6,211.5 453.5,212.5 458.4,213.6 463.3,214.7 468.1,215.9 472.9,217.1 477.8,218.4 482.6,219.8 487.3,221.3 492.1,222.8 496.8,224.3 501.6,225.9 506.3,227.6 511.0,229.4 515.6,231.2 520.3,233.0 524.9,235.0 529.5,237.0 534.1,239.0 538.6,241.1 543.1,243.3 547.6,245.5 552.1,247.8 556.5,250.1 560.9,252.5 565.3,255.0 569.6,257.5 573.9,260.1 578.2,262.7 582.5,265.4 586.7,268.1 590.9,270.9 595.0,273.7 599.2,276.6 603.2,279.6 607.3,282.6 611.3,285.6 615.2,288.8 619.2,291.9 623.1,295.1 626.9,298.4" fill="none" stroke="#626259" stroke-width="12"/>
<path d="M 225.6,388.5 228.2,386.6 230.9,384.8 233.5,382.9 236.2,381.1 239.0,379.4 241.7,377.6 244.4,375.9 247.2,374.3 250.0,372.6 252.8,371.1 255.6,369.5 258.4,368.0 261.3,366.5 264.2,365.1 267.0,363.7 269.9,362.3 272.9,361.0 275.8,359.7 278.7,358.4 281.7,357.2 284.6,356.0 287.6,354.9 290.6,353.8 293.6,352.7 296.6,351.7 299.6,350.7 302.7,349.8 305.7,348.9 308.8,348.0 311.8,347.2 314.9,346.4 318.0,345.6 321.0,344.9 324.1,344.3 327.2,343.6 330.3,343.0 333.5,342.5 336.6,342.0 339.7,341.5 342.8,341.1 346.0,340.7 349.1,340.4 352.2,340.0 355.4,339.8 358.5,339.6 361.7,339.4 364.8,339.2 368.0,339.1 371.1,339.1 374.3,339.1 377.4,339.1 380.6,339.1 383.7,339.2 386.9,339.4 390.0,339.6 393.2,339.8 396.3,340.0 399.5,340.4 402.6,340.7 405.7,341.1 408.8,341.5 412.0,342.0 415.1,342.5 418.2,343.0 421.3,343.6 424.4,344.3 427.5,344.9 430.6,345.6 433.7,346.4 436.7,347.2 439.8,348.0 442.8,348.9 445.9,349.8 448.9,350.7 451.9,351.7 455.0,352.7 458.0,353.8 460.9,354.9 463.9,356.0 466.9,357.2 469.8,358.4 472.8,359.7 475.7,361.0 478.6,362.3 481.5,363.7 484.4,365.1 487.3,366.5 490.1,368.0 492.9,369.5 495.8,371.1 498.6,372.6 501.3,374.3 504.1,375.9 506.9,377.6 509.6,379.4 512.3,381.1 515.0,382.9 517.7,384.8 520.3,386.6 523.0,388.5" fill="none" stroke="#5a5a52" stroke-width="12"/></g>
<rect x="0" y="180" width="740" height="310" filter="url(#nz)" opacity="0.3"/>
</g>
<path d="M 57.1,390.2 59.9,386.2 62.7,382.2 65.6,378.3 68.5,374.4 71.4,370.5 74.4,366.7 77.5,362.9 80.5,359.2 83.6,355.4 86.8,351.8 90.0,348.2 93.2,344.6 96.5,341.0 99.8,337.5 103.1,334.1 106.5,330.6 109.9,327.3 113.3,323.9 116.8,320.7 120.3,317.4 123.9,314.2 127.4,311.1 131.1,308.0 134.7,304.9 138.4,301.9 142.1,298.9 145.8,296.0 149.6,293.1 153.4,290.3 157.3,287.5 161.1,284.8 165.0,282.1 168.9,279.5 172.9,276.9 176.8,274.4 180.8,271.9 184.9,269.5 188.9,267.1 193.0,264.8 197.1,262.5 201.2,260.3 205.4,258.1 209.5,256.0 213.7,253.9 218.0,251.9 222.2,249.9 226.4,248.0 230.7,246.2 235.0,244.4 239.3,242.7 243.7,241.0 248.0,239.3 252.4,237.8 256.8,236.2 261.2,234.8 265.6,233.4 270.0,232.0 274.4,230.7 278.9,229.5 283.4,228.3 287.8,227.2 292.3,226.1 296.8,225.1 301.4,224.1 305.9,223.2 310.4,222.4 315.0,221.6 319.5,220.9 324.1,220.2 328.6,219.6 333.2,219.1 337.8,218.6 342.4,218.1 346.9,217.7 351.5,217.4 356.1,217.2 360.7,217.0 365.3,216.8 369.9,216.7 374.5,216.7 379.1,216.7 383.7,216.8 388.3,217.0 392.9,217.2 397.5,217.4 402.1,217.7 406.6,218.1 411.2,218.6 415.8,219.1 420.4,219.6 424.9,220.2 429.5,220.9 434.0,221.6 438.6,222.4 443.1,223.2 447.6,224.1 452.2,225.1 456.7,226.1 461.2,227.2 465.6,228.3 470.1,229.5 474.6,230.7 479.0,232.0 483.4,233.4 487.8,234.8 492.2,236.2 496.6,237.8 501.0,239.3 505.3,241.0 509.7,242.7 514.0,244.4 518.3,246.2 522.6,248.0 526.8,249.9 531.0,251.9 535.3,253.9 539.5,256.0 543.6,258.1 547.8,260.3 551.9,262.5 556.0,264.8 560.1,267.1 564.1,269.5 568.2,271.9 572.2,274.4 576.1,276.9 580.1,279.5 584.0,282.1 587.9,284.8 591.7,287.5 595.6,290.3 599.4,293.1 603.2,296.0 606.9,298.9 610.6,301.9 614.3,304.9 617.9,308.0 621.6,311.1 625.1,314.2 628.7,317.4 632.2,320.7 635.7,323.9 639.1,327.3 642.5,330.6 645.9,334.1 649.2,337.5 652.5,341.0 655.8,344.6 659.0,348.2 662.2,351.8 665.4,355.4 668.5,359.2 671.5,362.9 674.6,366.7 677.6,370.5 680.5,374.4 683.4,378.3 686.3,382.2 689.1,386.2 691.9,390.2 L 594.9,443.3 592.9,440.6 590.9,437.9 588.9,435.2 586.8,432.6 584.7,430.0 582.6,427.4 580.4,424.9 578.2,422.3 576.0,419.8 573.8,417.3 571.6,414.9 569.3,412.5 567.0,410.1 564.7,407.7 562.3,405.4 560.0,403.1 557.6,400.8 555.1,398.6 552.7,396.3 550.2,394.2 547.7,392.0 545.2,389.9 542.7,387.8 540.2,385.7 537.6,383.7 535.0,381.7 532.4,379.7 529.7,377.8 527.1,375.9 524.4,374.0 521.7,372.2 519.0,370.4 516.3,368.6 513.5,366.9 510.8,365.2 508.0,363.5 505.2,361.9 502.4,360.3 499.6,358.7 496.7,357.2 493.9,355.7 491.0,354.2 488.1,352.8 485.2,351.4 482.3,350.1 479.3,348.8 476.4,347.5 473.4,346.2 470.4,345.0 467.5,343.9 464.5,342.7 461.5,341.6 458.4,340.6 455.4,339.6 452.4,338.6 449.3,337.6 446.3,336.7 443.2,335.8 440.1,335.0 437.0,334.2 433.9,333.5 430.8,332.7 427.7,332.1 424.6,331.4 421.5,330.8 418.4,330.3 415.2,329.7 412.1,329.2 409.0,328.8 405.8,328.4 402.7,328.0 399.5,327.7 396.4,327.4 393.2,327.1 390.0,326.9 386.9,326.8 383.7,326.6 380.5,326.5 377.4,326.5 374.2,326.4 371.0,326.5 367.9,326.5 364.7,326.6 361.5,326.8 358.4,326.9 355.2,327.1 352.0,327.4 348.9,327.7 345.7,328.0 342.6,328.4 339.4,328.8 336.3,329.2 333.2,329.7 330.0,330.3 326.9,330.8 323.8,331.4 320.7,332.1 317.6,332.7 314.5,333.5 311.4,334.2 308.3,335.0 305.2,335.8 302.1,336.7 299.1,337.6 296.0,338.6 293.0,339.6 290.0,340.6 286.9,341.6 283.9,342.7 280.9,343.9 278.0,345.0 275.0,346.2 272.0,347.5 269.1,348.8 266.1,350.1 263.2,351.4 260.3,352.8 257.4,354.2 254.5,355.7 251.7,357.2 248.8,358.7 246.0,360.3 243.2,361.9 240.4,363.5 237.6,365.2 234.9,366.9 232.1,368.6 229.4,370.4 226.7,372.2 224.0,374.0 221.3,375.9 218.7,377.8 216.0,379.7 213.4,381.7 210.8,383.7 208.2,385.7 205.7,387.8 203.2,389.9 200.7,392.0 198.2,394.2 195.7,396.3 193.3,398.6 190.8,400.8 188.4,403.1 186.1,405.4 183.7,407.7 181.4,410.1 179.1,412.5 176.8,414.9 174.6,417.3 172.4,419.8 170.2,422.3 168.0,424.9 165.8,427.4 163.7,430.0 161.6,432.6 159.5,435.2 157.5,437.9 155.5,440.6 153.5,443.3 Z" fill="url(#tat)"/>
</svg>
<svg class="abs" style="left:0;top:0" width="957" height="669" shape-rendering="crispEdges"><rect x="736" y="241" width="1" height="21" fill="rgb(128,128,128)"/><rect x="738" y="241" width="1" height="21" fill="rgb(191,191,191)"/><rect x="739" y="241" width="1" height="21" fill="rgb(178,178,178)"/><rect x="740" y="241" width="1" height="21" fill="rgb(38,38,38)"/><rect x="741" y="241" width="1" height="21" fill="rgb(13,13,13)"/><rect x="742" y="241" width="1" height="21" fill="rgb(178,178,178)"/><rect x="743" y="241" width="1" height="21" fill="rgb(0,0,0)"/><rect x="744" y="241" width="1" height="21" fill="rgb(115,115,115)"/><rect x="745" y="241" width="1" height="21" fill="rgb(153,153,153)"/><rect x="746" y="241" width="1" height="21" fill="rgb(230,230,230)"/><rect x="747" y="241" width="1" height="21" fill="rgb(38,38,38)"/><rect x="748" y="241" width="1" height="21" fill="rgb(13,13,13)"/><rect x="749" y="241" width="1" height="21" fill="rgb(178,178,178)"/><rect x="750" y="241" width="1" height="21" fill="rgb(178,178,178)"/><rect x="751" y="241" width="1" height="21" fill="rgb(89,89,89)"/><rect x="752" y="241" width="1" height="21" fill="rgb(178,178,178)"/><rect x="753" y="241" width="1" height="21" fill="rgb(0,0,0)"/><rect x="754" y="241" width="1" height="21" fill="rgb(242,242,242)"/><rect x="756" y="241" width="1" height="21" fill="rgb(140,140,140)"/><rect x="757" y="241" width="1" height="21" fill="rgb(217,217,217)"/><rect x="758" y="241" width="1" height="21" fill="rgb(38,38,38)"/><rect x="759" y="241" width="1" height="21" fill="rgb(13,13,13)"/><rect x="760" y="241" width="1" height="21" fill="rgb(178,178,178)"/><rect x="761" y="241" width="1" height="21" fill="rgb(204,204,204)"/><rect x="762" y="241" width="1" height="21" fill="rgb(38,38,38)"/><rect x="763" y="241" width="1" height="21" fill="rgb(13,13,13)"/><rect x="764" y="241" width="1" height="21" fill="rgb(178,178,178)"/><rect x="765" y="241" width="1" height="21" fill="rgb(191,191,191)"/><rect x="767" y="241" width="1" height="21" fill="rgb(140,140,140)"/><rect x="768" y="241" width="1" height="21" fill="rgb(217,217,217)"/><rect x="769" y="241" width="1" height="21" fill="rgb(38,38,38)"/><rect x="770" y="241" width="1" height="21" fill="rgb(26,26,26)"/><rect x="771" y="241" width="1" height="21" fill="rgb(166,166,166)"/><rect x="772" y="241" width="1" height="21" fill="rgb(13,13,13)"/><rect x="773" y="241" width="1" height="21" fill="rgb(115,115,115)"/><rect x="774" y="241" width="1" height="21" fill="rgb(76,76,76)"/><rect x="775" y="241" width="1" height="21" fill="rgb(242,242,242)"/><rect x="776" y="241" width="1" height="21" fill="rgb(204,204,204)"/><rect x="777" y="241" width="1" height="21" fill="rgb(102,102,102)"/><rect x="778" y="241" width="1" height="21" fill="rgb(153,153,153)"/><rect x="779" y="241" width="1" height="21" fill="rgb(217,217,217)"/><rect x="780" y="241" width="1" height="21" fill="rgb(38,38,38)"/><rect x="781" y="241" width="1" height="21" fill="rgb(13,13,13)"/><rect x="782" y="241" width="1" height="21" fill="rgb(178,178,178)"/><rect x="783" y="241" width="1" height="21" fill="rgb(178,178,178)"/><rect x="784" y="241" width="1" height="21" fill="rgb(89,89,89)"/><rect x="785" y="241" width="1" height="21" fill="rgb(140,140,140)"/><rect x="786" y="241" width="1" height="21" fill="rgb(242,242,242)"/><rect x="788" y="241" width="1" height="21" fill="rgb(115,115,115)"/><rect x="789" y="241" width="1" height="21" fill="rgb(13,13,13)"/><rect x="790" y="241" width="1" height="21" fill="rgb(217,217,217)"/><rect x="791" y="241" width="1" height="21" fill="rgb(38,38,38)"/><rect x="792" y="241" width="1" height="21" fill="rgb(13,13,13)"/><rect x="793" y="241" width="1" height="21" fill="rgb(178,178,178)"/><rect x="794" y="241" width="1" height="21" fill="rgb(178,178,178)"/><rect x="795" y="241" width="1" height="21" fill="rgb(38,38,38)"/><rect x="796" y="241" width="1" height="21" fill="rgb(13,13,13)"/><rect x="797" y="241" width="1" height="21" fill="rgb(242,242,242)"/><rect x="798" y="241" width="1" height="21" fill="rgb(204,204,204)"/><rect x="799" y="241" width="1" height="21" fill="rgb(102,102,102)"/><rect x="800" y="241" width="1" height="21" fill="rgb(153,153,153)"/><rect x="801" y="241" width="1" height="21" fill="rgb(217,217,217)"/><rect x="802" y="241" width="1" height="21" fill="rgb(38,38,38)"/><rect x="803" y="241" width="1" height="21" fill="rgb(13,13,13)"/><rect x="804" y="241" width="1" height="21" fill="rgb(178,178,178)"/><rect x="805" y="241" width="1" height="21" fill="rgb(178,178,178)"/><rect x="806" y="241" width="1" height="21" fill="rgb(89,89,89)"/><rect x="807" y="241" width="1" height="21" fill="rgb(140,140,140)"/><rect x="808" y="241" width="1" height="21" fill="rgb(0,0,0)"/><rect x="809" y="241" width="1" height="21" fill="rgb(242,242,242)"/><rect x="811" y="241" width="1" height="21" fill="rgb(153,153,153)"/><rect x="812" y="241" width="1" height="21" fill="rgb(217,217,217)"/><rect x="813" y="241" width="1" height="21" fill="rgb(128,128,128)"/><rect x="815" y="241" width="1" height="21" fill="rgb(13,13,13)"/><rect x="816" y="241" width="1" height="21" fill="rgb(178,178,178)"/><rect x="817" y="241" width="1" height="21" fill="rgb(0,0,0)"/><rect x="818" y="241" width="1" height="21" fill="rgb(115,115,115)"/><rect x="819" y="241" width="1" height="21" fill="rgb(153,153,153)"/><rect x="820" y="241" width="1" height="21" fill="rgb(230,230,230)"/><rect x="821" y="241" width="1" height="21" fill="rgb(38,38,38)"/><rect x="822" y="241" width="1" height="21" fill="rgb(13,13,13)"/><rect x="823" y="241" width="1" height="21" fill="rgb(178,178,178)"/><rect x="824" y="241" width="1" height="21" fill="rgb(178,178,178)"/><rect x="825" y="241" width="1" height="21" fill="rgb(89,89,89)"/><rect x="826" y="241" width="1" height="21" fill="rgb(178,178,178)"/><rect x="827" y="241" width="1" height="21" fill="rgb(0,0,0)"/><rect x="828" y="241" width="1" height="21" fill="rgb(242,242,242)"/><rect x="830" y="241" width="1" height="21" fill="rgb(140,140,140)"/><rect x="831" y="241" width="1" height="21" fill="rgb(217,217,217)"/><rect x="832" y="241" width="1" height="21" fill="rgb(38,38,38)"/><rect x="833" y="241" width="1" height="21" fill="rgb(13,13,13)"/><rect x="834" y="241" width="1" height="21" fill="rgb(178,178,178)"/><rect x="835" y="241" width="1" height="21" fill="rgb(204,204,204)"/><rect x="836" y="241" width="1" height="21" fill="rgb(38,38,38)"/><rect x="837" y="241" width="1" height="21" fill="rgb(13,13,13)"/><rect x="838" y="241" width="1" height="21" fill="rgb(178,178,178)"/><rect x="839" y="241" width="1" height="21" fill="rgb(191,191,191)"/><rect x="841" y="241" width="1" height="21" fill="rgb(140,140,140)"/><rect x="842" y="241" width="1" height="21" fill="rgb(217,217,217)"/><rect x="843" y="241" width="1" height="21" fill="rgb(38,38,38)"/><rect x="844" y="241" width="1" height="21" fill="rgb(26,26,26)"/><rect x="845" y="241" width="1" height="21" fill="rgb(166,166,166)"/><rect x="846" y="241" width="1" height="21" fill="rgb(13,13,13)"/><rect x="847" y="241" width="1" height="21" fill="rgb(115,115,115)"/><rect x="848" y="241" width="1" height="21" fill="rgb(76,76,76)"/><rect x="849" y="241" width="1" height="21" fill="rgb(153,153,153)"/><rect x="850" y="241" width="1" height="21" fill="rgb(217,217,217)"/><rect x="851" y="241" width="1" height="21" fill="rgb(38,38,38)"/><rect x="852" y="241" width="1" height="21" fill="rgb(13,13,13)"/><rect x="853" y="241" width="1" height="21" fill="rgb(178,178,178)"/><rect x="854" y="241" width="1" height="21" fill="rgb(178,178,178)"/><rect x="855" y="241" width="1" height="21" fill="rgb(89,89,89)"/><rect x="856" y="241" width="1" height="21" fill="rgb(140,140,140)"/><rect x="857" y="241" width="1" height="21" fill="rgb(242,242,242)"/><rect x="859" y="241" width="1" height="21" fill="rgb(115,115,115)"/><rect x="860" y="241" width="1" height="21" fill="rgb(13,13,13)"/><rect x="861" y="241" width="1" height="21" fill="rgb(217,217,217)"/><rect x="862" y="241" width="1" height="21" fill="rgb(38,38,38)"/><rect x="863" y="241" width="1" height="21" fill="rgb(13,13,13)"/><rect x="864" y="241" width="1" height="21" fill="rgb(178,178,178)"/><rect x="865" y="241" width="1" height="21" fill="rgb(178,178,178)"/><rect x="866" y="241" width="1" height="21" fill="rgb(38,38,38)"/><rect x="867" y="241" width="1" height="21" fill="rgb(13,13,13)"/><rect x="868" y="241" width="1" height="21" fill="rgb(242,242,242)"/><rect x="869" y="241" width="1" height="21" fill="rgb(204,204,204)"/><rect x="870" y="241" width="1" height="21" fill="rgb(102,102,102)"/><rect x="871" y="241" width="1" height="21" fill="rgb(153,153,153)"/><rect x="872" y="241" width="1" height="21" fill="rgb(217,217,217)"/><rect x="873" y="241" width="1" height="21" fill="rgb(38,38,38)"/><rect x="874" y="241" width="1" height="21" fill="rgb(13,13,13)"/><rect x="875" y="241" width="1" height="21" fill="rgb(178,178,178)"/><rect x="876" y="241" width="1" height="21" fill="rgb(178,178,178)"/><rect x="877" y="241" width="1" height="21" fill="rgb(89,89,89)"/><rect x="878" y="241" width="1" height="21" fill="rgb(140,140,140)"/><rect x="879" y="241" width="1" height="21" fill="rgb(0,0,0)"/><rect x="880" y="241" width="1" height="21" fill="rgb(242,242,242)"/><rect x="882" y="241" width="1" height="21" fill="rgb(153,153,153)"/><rect x="883" y="241" width="1" height="21" fill="rgb(217,217,217)"/><rect x="884" y="241" width="1" height="21" fill="rgb(128,128,128)"/><rect x="887" y="241" width="1" height="21" fill="rgb(26,26,26)"/><rect x="888" y="241" width="1" height="21" fill="rgb(153,153,153)"/><rect x="889" y="241" width="1" height="21" fill="rgb(13,13,13)"/><rect x="736" y="262" width="1" height="11" fill="rgb(128,128,128)"/><rect x="737" y="262" width="1" height="11" fill="rgb(153,153,153)"/><rect x="738" y="262" width="1" height="11" fill="rgb(13,13,13)"/><rect x="739" y="262" width="1" height="11" fill="rgb(153,153,153)"/><rect x="740" y="262" width="1" height="11" fill="rgb(102,102,102)"/><rect x="741" y="262" width="1" height="11" fill="rgb(242,242,242)"/><rect x="742" y="262" width="1" height="11" fill="rgb(204,204,204)"/><rect x="743" y="262" width="1" height="11" fill="rgb(178,178,178)"/><rect x="744" y="262" width="1" height="11" fill="rgb(76,76,76)"/><rect x="745" y="262" width="1" height="11" fill="rgb(26,26,26)"/><rect x="746" y="262" width="1" height="11" fill="rgb(217,217,217)"/><rect x="747" y="262" width="1" height="11" fill="rgb(38,38,38)"/><rect x="748" y="262" width="1" height="11" fill="rgb(13,13,13)"/><rect x="749" y="262" width="1" height="11" fill="rgb(178,178,178)"/><rect x="750" y="262" width="1" height="11" fill="rgb(178,178,178)"/><rect x="751" y="262" width="1" height="11" fill="rgb(38,38,38)"/><rect x="752" y="262" width="1" height="11" fill="rgb(13,13,13)"/><rect x="753" y="262" width="1" height="11" fill="rgb(166,166,166)"/><rect x="754" y="262" width="1" height="11" fill="rgb(242,242,242)"/><rect x="756" y="262" width="1" height="11" fill="rgb(140,140,140)"/><rect x="757" y="262" width="1" height="11" fill="rgb(217,217,217)"/><rect x="758" y="262" width="1" height="11" fill="rgb(38,38,38)"/><rect x="759" y="262" width="1" height="11" fill="rgb(13,13,13)"/><rect x="760" y="262" width="1" height="11" fill="rgb(178,178,178)"/><rect x="761" y="262" width="1" height="11" fill="rgb(204,204,204)"/><rect x="762" y="262" width="1" height="11" fill="rgb(102,102,102)"/><rect x="763" y="262" width="1" height="11" fill="rgb(140,140,140)"/><rect x="764" y="262" width="1" height="11" fill="rgb(0,0,0)"/><rect x="765" y="262" width="1" height="11" fill="rgb(191,191,191)"/><rect x="767" y="262" width="1" height="11" fill="rgb(140,140,140)"/><rect x="768" y="262" width="1" height="11" fill="rgb(217,217,217)"/><rect x="769" y="262" width="1" height="11" fill="rgb(102,102,102)"/><rect x="770" y="262" width="1" height="11" fill="rgb(153,153,153)"/><rect x="771" y="262" width="1" height="11" fill="rgb(191,191,191)"/><rect x="772" y="262" width="1" height="11" fill="rgb(26,26,26)"/><rect x="773" y="262" width="1" height="11" fill="rgb(13,13,13)"/><rect x="774" y="262" width="1" height="11" fill="rgb(242,242,242)"/><rect x="775" y="262" width="1" height="11" fill="rgb(178,178,178)"/><rect x="776" y="262" width="1" height="11" fill="rgb(178,178,178)"/><rect x="777" y="262" width="1" height="11" fill="rgb(76,76,76)"/><rect x="778" y="262" width="1" height="11" fill="rgb(13,13,13)"/><rect x="779" y="262" width="1" height="11" fill="rgb(217,217,217)"/><rect x="780" y="262" width="1" height="11" fill="rgb(38,38,38)"/><rect x="781" y="262" width="1" height="11" fill="rgb(13,13,13)"/><rect x="782" y="262" width="1" height="11" fill="rgb(178,178,178)"/><rect x="783" y="262" width="1" height="11" fill="rgb(178,178,178)"/><rect x="784" y="262" width="1" height="11" fill="rgb(38,38,38)"/><rect x="785" y="262" width="1" height="11" fill="rgb(13,13,13)"/><rect x="786" y="262" width="1" height="11" fill="rgb(242,242,242)"/><rect x="787" y="262" width="1" height="11" fill="rgb(204,204,204)"/><rect x="788" y="262" width="1" height="11" fill="rgb(102,102,102)"/><rect x="789" y="262" width="1" height="11" fill="rgb(153,153,153)"/><rect x="790" y="262" width="1" height="11" fill="rgb(217,217,217)"/><rect x="791" y="262" width="1" height="11" fill="rgb(38,38,38)"/><rect x="792" y="262" width="1" height="11" fill="rgb(13,13,13)"/><rect x="793" y="262" width="1" height="11" fill="rgb(178,178,178)"/><rect x="794" y="262" width="1" height="11" fill="rgb(178,178,178)"/><rect x="795" y="262" width="1" height="11" fill="rgb(89,89,89)"/><rect x="796" y="262" width="1" height="11" fill="rgb(140,140,140)"/><rect x="797" y="262" width="1" height="11" fill="rgb(0,0,0)"/><rect x="798" y="262" width="1" height="11" fill="rgb(242,242,242)"/><rect x="800" y="262" width="1" height="11" fill="rgb(153,153,153)"/><rect x="801" y="262" width="1" height="11" fill="rgb(217,217,217)"/><rect x="802" y="262" width="1" height="11" fill="rgb(128,128,128)"/><rect x="804" y="262" width="1" height="11" fill="rgb(178,178,178)"/><rect x="805" y="262" width="1" height="11" fill="rgb(0,0,0)"/><rect x="806" y="262" width="1" height="11" fill="rgb(115,115,115)"/><rect x="807" y="262" width="1" height="11" fill="rgb(89,89,89)"/><rect x="808" y="262" width="1" height="11" fill="rgb(153,153,153)"/><rect x="809" y="262" width="1" height="11" fill="rgb(0,0,0)"/><rect x="810" y="262" width="1" height="11" fill="rgb(89,89,89)"/><rect x="811" y="262" width="1" height="11" fill="rgb(217,217,217)"/><rect x="812" y="262" width="1" height="11" fill="rgb(217,217,217)"/><rect x="813" y="262" width="1" height="11" fill="rgb(38,38,38)"/><rect x="814" y="262" width="1" height="11" fill="rgb(13,13,13)"/><rect x="815" y="262" width="1" height="11" fill="rgb(13,13,13)"/><rect x="816" y="262" width="1" height="11" fill="rgb(178,178,178)"/><rect x="817" y="262" width="1" height="11" fill="rgb(0,0,0)"/><rect x="818" y="262" width="1" height="11" fill="rgb(115,115,115)"/><rect x="819" y="262" width="1" height="11" fill="rgb(153,153,153)"/><rect x="820" y="262" width="1" height="11" fill="rgb(230,230,230)"/><rect x="821" y="262" width="1" height="11" fill="rgb(38,38,38)"/><rect x="822" y="262" width="1" height="11" fill="rgb(13,13,13)"/><rect x="823" y="262" width="1" height="11" fill="rgb(178,178,178)"/><rect x="824" y="262" width="1" height="11" fill="rgb(178,178,178)"/><rect x="825" y="262" width="1" height="11" fill="rgb(89,89,89)"/><rect x="826" y="262" width="1" height="11" fill="rgb(178,178,178)"/><rect x="827" y="262" width="1" height="11" fill="rgb(0,0,0)"/><rect x="828" y="262" width="1" height="11" fill="rgb(242,242,242)"/><rect x="830" y="262" width="1" height="11" fill="rgb(140,140,140)"/><rect x="831" y="262" width="1" height="11" fill="rgb(217,217,217)"/><rect x="832" y="262" width="1" height="11" fill="rgb(38,38,38)"/><rect x="833" y="262" width="1" height="11" fill="rgb(13,13,13)"/><rect x="834" y="262" width="1" height="11" fill="rgb(178,178,178)"/><rect x="835" y="262" width="1" height="11" fill="rgb(204,204,204)"/><rect x="836" y="262" width="1" height="11" fill="rgb(102,102,102)"/><rect x="837" y="262" width="1" height="11" fill="rgb(140,140,140)"/><rect x="838" y="262" width="1" height="11" fill="rgb(0,0,0)"/><rect x="839" y="262" width="1" height="11" fill="rgb(191,191,191)"/><rect x="841" y="262" width="1" height="11" fill="rgb(140,140,140)"/><rect x="842" y="262" width="1" height="11" fill="rgb(217,217,217)"/><rect x="843" y="262" width="1" height="11" fill="rgb(102,102,102)"/><rect x="844" y="262" width="1" height="11" fill="rgb(153,153,153)"/><rect x="845" y="262" width="1" height="11" fill="rgb(191,191,191)"/><rect x="846" y="262" width="1" height="11" fill="rgb(26,26,26)"/><rect x="847" y="262" width="1" height="11" fill="rgb(13,13,13)"/><rect x="848" y="262" width="1" height="11" fill="rgb(242,242,242)"/><rect x="849" y="262" width="1" height="11" fill="rgb(140,140,140)"/><rect x="850" y="262" width="1" height="11" fill="rgb(242,242,242)"/><rect x="852" y="262" width="1" height="11" fill="rgb(115,115,115)"/><rect x="853" y="262" width="1" height="11" fill="rgb(13,13,13)"/><rect x="854" y="262" width="1" height="11" fill="rgb(217,217,217)"/><rect x="855" y="262" width="1" height="11" fill="rgb(38,38,38)"/><rect x="856" y="262" width="1" height="11" fill="rgb(13,13,13)"/><rect x="857" y="262" width="1" height="11" fill="rgb(178,178,178)"/><rect x="858" y="262" width="1" height="11" fill="rgb(178,178,178)"/><rect x="859" y="262" width="1" height="11" fill="rgb(38,38,38)"/><rect x="860" y="262" width="1" height="11" fill="rgb(13,13,13)"/><rect x="861" y="262" width="1" height="11" fill="rgb(242,242,242)"/><rect x="862" y="262" width="1" height="11" fill="rgb(204,204,204)"/><rect x="863" y="262" width="1" height="11" fill="rgb(102,102,102)"/><rect x="864" y="262" width="1" height="11" fill="rgb(153,153,153)"/><rect x="865" y="262" width="1" height="11" fill="rgb(217,217,217)"/><rect x="866" y="262" width="1" height="11" fill="rgb(38,38,38)"/><rect x="867" y="262" width="1" height="11" fill="rgb(13,13,13)"/><rect x="868" y="262" width="1" height="11" fill="rgb(178,178,178)"/><rect x="869" y="262" width="1" height="11" fill="rgb(178,178,178)"/><rect x="870" y="262" width="1" height="11" fill="rgb(89,89,89)"/><rect x="871" y="262" width="1" height="11" fill="rgb(140,140,140)"/><rect x="872" y="262" width="1" height="11" fill="rgb(0,0,0)"/><rect x="873" y="262" width="1" height="11" fill="rgb(242,242,242)"/><rect x="875" y="262" width="1" height="11" fill="rgb(153,153,153)"/><rect x="876" y="262" width="1" height="11" fill="rgb(217,217,217)"/><rect x="877" y="262" width="1" height="11" fill="rgb(128,128,128)"/><rect x="879" y="262" width="1" height="11" fill="rgb(178,178,178)"/><rect x="880" y="262" width="1" height="11" fill="rgb(178,178,178)"/><rect x="881" y="262" width="1" height="11" fill="rgb(76,76,76)"/><rect x="882" y="262" width="1" height="11" fill="rgb(13,13,13)"/><rect x="883" y="262" width="1" height="11" fill="rgb(217,217,217)"/><rect x="884" y="262" width="1" height="11" fill="rgb(38,38,38)"/><rect x="885" y="262" width="1" height="11" fill="rgb(13,13,13)"/><rect x="886" y="262" width="1" height="11" fill="rgb(178,178,178)"/><rect x="887" y="262" width="1" height="11" fill="rgb(26,26,26)"/><rect x="888" y="262" width="1" height="11" fill="rgb(153,153,153)"/><rect x="889" y="262" width="1" height="11" fill="rgb(13,13,13)"/></svg>
<div class="abs" style="left:784px;top:315px;width:6px;height:8px;border:1px solid #000;background:#fff"></div>
<div class="abs" style="left:784px;top:336px;width:6px;height:8px;border:1px solid #000;background:#231f1c"></div>
<div class="t" style="left:25.2px;top:10.0px;letter-spacing:0.01px">Wilcom EmbroideryStudio – Level 3</div><div class="t" style="left:469.0px;top:10.0px;letter-spacing:0.04px">Z: 1.78</div><div class="t" style="left:571.3px;top:10.0px;letter-spacing:0.07px">Rocker Patch Border 5 Inch</div><div class="t" style="left:728.2px;top:10.0px;letter-spacing:-0.03px">H: 51.3 mm</div><div class="t" style="left:772.0px;top:10.0px;letter-spacing:-0.01px">W: 125.3 mm</div><div class="t" style="left:736.3px;top:27.0px;letter-spacing:0.16px">Stitches:</div><div class="t" style="left:840.0px;top:27.0px;letter-spacing:-0.27px">6799</div><div class="t" style="left:736.3px;top:38.0px;letter-spacing:0.41px">Colors:</div><div class="t" style="left:840.0px;top:38.0px;letter-spacing:0.00px">2</div><div class="t" style="left:736.3px;top:48.0px;letter-spacing:0.17px">Color changes:</div><div class="t" style="left:840.0px;top:48.0px;letter-spacing:0.00px">1</div><div class="t" style="left:736.3px;top:59.0px;letter-spacing:0.02px">Stops:</div><div class="t" style="left:840.0px;top:59.0px;letter-spacing:0.00px">2</div><div class="t" style="left:736.3px;top:80.0px;letter-spacing:0.23px">Machine:</div><div class="t" style="left:840.0px;top:80.0px;letter-spacing:0.02px">Tajima</div><div class="t" style="left:736.3px;top:91.0px;letter-spacing:0.40px">Trims:</div><div class="t" style="left:840.0px;top:91.0px;letter-spacing:0.00px">2</div><div class="t" style="left:736.3px;top:112.0px;letter-spacing:0.03px">Left:</div><div class="t" style="left:840.0px;top:112.0px;letter-spacing:0.00px">62.7 mm</div><div class="t" style="left:736.3px;top:123.0px;letter-spacing:0.49px">Right:</div><div class="t" style="left:840.0px;top:123.0px;letter-spacing:0.00px">62.7 mm</div><div class="t" style="left:736.3px;top:133.0px;letter-spacing:0.35px">Up:</div><div class="t" style="left:840.0px;top:133.0px;letter-spacing:0.00px">25.6 mm</div><div class="t" style="left:736.3px;top:144.0px;letter-spacing:0.03px">Down:</div><div class="t" style="left:840.0px;top:144.0px;letter-spacing:0.00px">25.6 mm</div><div class="t" style="left:736.3px;top:165.0px;letter-spacing:-0.06px">EndX:</div><div class="t" style="left:840.0px;top:165.0px;letter-spacing:0.00px">0.0 mm</div><div class="t" style="left:736.3px;top:176.0px;letter-spacing:-0.06px">EndY:</div><div class="t" style="left:840.0px;top:176.0px;letter-spacing:0.00px">0.0 mm</div><div class="t" style="left:736.3px;top:197.0px;letter-spacing:-0.01px">Max Stitch:</div><div class="t" style="left:840.0px;top:197.0px;letter-spacing:0.00px">6.7 mm</div><div class="t" style="left:736.3px;top:208.0px;letter-spacing:0.24px">Min Stitch:</div><div class="t" style="left:840.0px;top:208.0px;letter-spacing:0.00px">0.5 mm</div><div class="t" style="left:736.3px;top:218.0px;letter-spacing:0.01px">Max Jump:</div><div class="t" style="left:840.0px;top:218.0px;letter-spacing:0.00px">6.7 mm</div><div class="t" style="left:736.1px;top:271.0px;letter-spacing:0.06px">Colorway:</div><div class="t" style="left:840.5px;top:271.0px;letter-spacing:-0.19px">Colorway 1</div><div class="b" style="left:736.1px;top:294.0px;letter-spacing:0.00px">#</div><div class="b" style="left:761.5px;top:294.0px;letter-spacing:0.58px">N#</div><div class="b" style="left:818.9px;top:294.0px;letter-spacing:-0.29px">St.</div><div class="b" style="left:849.4px;top:294.0px;letter-spacing:0.37px">Descr _Code</div><div class="t" style="left:736.3px;top:314.0px;letter-spacing:0.00px">1.</div><div class="t" style="left:760.4px;top:314.0px;letter-spacing:-0.58px">15</div><div class="t" style="left:824.0px;top:314.0px;letter-spacing:0.00px">4704</div><div class="t" style="left:845.2px;top:314.0px;letter-spacing:-0.10px">White 15</div><div class="t" style="left:748.2px;top:325.0px;letter-spacing:0.14px">Brand: Wilcom</div><div class="t" style="left:736.3px;top:335.0px;letter-spacing:0.00px">2.</div><div class="t" style="left:760.4px;top:335.0px;letter-spacing:-0.58px">13</div><div class="t" style="left:824.0px;top:335.0px;letter-spacing:0.00px">2093</div><div class="t" style="left:845.2px;top:335.0px;letter-spacing:-0.03px">Black 13</div><div class="t" style="left:748.2px;top:346.0px;letter-spacing:0.14px">Brand: Wilcom</div><div class="t" style="left:736.3px;top:356.0px;letter-spacing:0.07px">Total Bobbin:</div><div class="t" style="left:842.2px;top:356.0px;letter-spacing:-0.21px">20.69m</div><div class="t" style="left:25.2px;top:644.0px;letter-spacing:-0.17px">Author:</div><div class="t" style="left:183.2px;top:644.0px;letter-spacing:-0.06px">Last Saved: 30 Jul, 2022</div><div class="t" style="left:321.3px;top:644.0px;letter-spacing:-0.04px">Printed: 30 Jul, 2022 17:41</div><div class="t" style="left:506.2px;top:644.0px;letter-spacing:-0.09px">Keywords:</div>
</body></html>
